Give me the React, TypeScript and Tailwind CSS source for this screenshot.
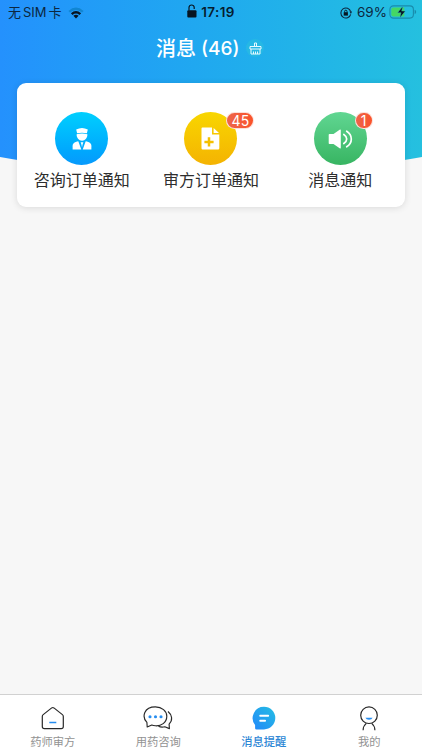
import type { ReactNode } from "react";

type Notice = {
  label: string;
  count?: number;
  circle: string;
  badge?: string;
  icon: ReactNode;
};

type Tab = {
  label: string;
  active?: boolean;
  icon: ReactNode;
};

const PharmacistIcon = () => (
  <svg width="20" height="24" viewBox="0 0 20 24" fill="#fff">
    <path d="M4.200 2.400Q10 -.6 15.800 2.400L14.900 6.300Q10 5 5.100 6.300Z" />
    <path d="M4.600 7.300Q10 5.900 15.400 7.300C15.500 10.700 13.200 13.800 10 13.800S4.500 10.700 4.600 7.300Z" />
    <path d="M6.300 14.300L9.300 22.600H.6V19.200C.6 16.200 2.600 15.100 6.300 14.300Z" />
    <path d="M13.700 14.300L10.700 22.600H19.400V19.200C19.400 16.200 17.400 15.100 13.700 14.300Z" />
    <path d="M8.600 15.200H11.400L10.700 17L10 20.200L9.300 17Z" />
  </svg>
);

const PrescriptionIcon = () => (
  <svg width="19" height="23" viewBox="0 0 19 23">
    <path d="M1.400 .5H11V7.400H18.300V21.300Q18.300 22.500 17.100 22.500H1.600Q.5 22.500 .5 21.300V1.500Q.5 .5 1.400 .5Z" fill="#fff" />
    <path d="M12.600 .9L18 6H12.600Z" fill="#fff" />
    <path d="M8 10.300V19.500M3.400 14.900H12.600" stroke="#f5c000" strokeWidth="2.500" />
  </svg>
);

const SpeakerIcon = () => (
  <svg width="25" height="20" viewBox="0 0 25 20" fill="none">
    <path d="M.7 5.800Q.7 5 1.500 5H5.500L12 .6Q12.800 .2 12.800 1.200V18.800Q12.800 19.800 12 19.400L5.500 15H1.500Q.7 15 .7 14.200Z" fill="#fff" />
    <path d="M15.800 5.500Q18.700 7.400 18.700 10T15.800 14.500M18.700 2.200Q23.300 5.100 23.300 10T18.700 17.800" stroke="#fff" strokeWidth="1.700" strokeLinecap="round" />
  </svg>
);

const HomeIcon = () => (
  <svg width="24" height="24" viewBox="0 0 24 24" fill="none">
    <path d="M2.200 8.600Q1.300 9.300 1.300 10.400V20.600Q1.300 22.700 3.400 22.700H20.200Q22.300 22.700 22.300 20.600V10.400Q22.300 9.300 21.400 8.600L12.900 1.900Q11.800 1.100 10.700 1.900Z" stroke="#292929" strokeWidth="1.200" />
    <path d="M8.300 16.500H15.300" stroke="#268df0" strokeWidth="1.500" />
  </svg>
);

const ChatIcon = () => (
  <svg width="30" height="24" viewBox="0 0 30 24" fill="none">
    <path d="M3.900 16.300C-1.500 10.800 1 .9 12.400 .9C18.900 .9 23.800 4.900 23.800 10.300C23.800 16.600 18 20.300 12.400 19.800Q10.300 19.600 8.800 19L4.200 21Z" stroke="#292929" strokeWidth="1.150" strokeLinejoin="round" />
    <path d="M25 5.500C29.200 8.900 30 14.300 26.100 18.100L26.400 22.600L21.800 20.800Q18.300 21.600 15.400 20.300" stroke="#292929" strokeWidth="1.150" strokeLinejoin="round" />
    <g fill="#268df0">
      <circle cx="7" cy="10.800" r="1.550" />
      <circle cx="12.500" cy="10.800" r="1.550" />
      <circle cx="18" cy="10.800" r="1.550" />
    </g>
  </svg>
);

const MessageIcon = () => (
  <svg width="24" height="24" viewBox="0 0 24 24" fill="none">
    <defs>
      <linearGradient id="bubble" x1="0" y1="1" x2="1" y2="0">
        <stop offset="0" stopColor="#2288fa" />
        <stop offset="1" stopColor="#25bee3" />
      </linearGradient>
    </defs>
    <path d="M12 .8A11.300 11.300 0 1 1 12 23.400L4.600 23.500Q3 23.500 3.100 22V19.100A11.300 11.300 0 0 1 12 .8Z" fill="url(#bubble)" />
    <path d="M8.200 9.800H16.200M8.200 14.800H13.100" stroke="#fff" strokeWidth="1.900" strokeLinecap="round" />
  </svg>
);

const ProfileIcon = () => (
  <svg width="20" height="25" viewBox="0 0 20 25" fill="none">
    <circle cx="10" cy="9.200" r="8.300" stroke="#292929" strokeWidth="1.200" />
    <path d="M4.100 24.200Q4.200 19.900 7.300 17.400M15.900 24.200Q15.800 19.900 12.700 17.400" stroke="#292929" strokeWidth="1.200" />
    <path d="M6.400 11.700H13.600Q12.800 13.700 10 13.700T6.400 11.700Z" fill="#268df0" />
  </svg>
);

const notices: Notice[] = [
  {
    label: "咨询订单通知",
    circle: "from-[#00cffe] to-[#0799fc]",
    icon: <PharmacistIcon />,
  },
  {
    label: "审方订单通知",
    count: 45,
    circle: "from-[#f8d600] to-[#f4b302]",
    badge: "left-[42px] w-7",
    icon: <PrescriptionIcon />,
  },
  {
    label: "消息通知",
    count: 1,
    circle: "from-[#60d692] to-[#37b562]",
    badge: "left-[41px] w-[18px]",
    icon: <SpeakerIcon />,
  },
];

const tabs: Tab[] = [
  { label: "药师审方", icon: <HomeIcon /> },
  { label: "用药咨询", icon: <ChatIcon /> },
  { label: "消息提醒", active: true, icon: <MessageIcon /> },
  { label: "我的", icon: <ProfileIcon /> },
];

const StatusBar = () => (
  <div className="grid h-6 grid-cols-3 items-center text-[#0c2740]">
    <div className="flex items-center pl-2 text-[13px] leading-6">
      <span className="mb-px whitespace-nowrap">
        无<span className="mx-[2px]">SIM</span>卡
      </span>
      <svg className="ml-[6px]" width="16" height="12" viewBox="0 0 16 12">
        <path d="M.4 3.900Q8 -2.900 15.600 3.900L14 5.600Q8 .2 2 5.600Z" fill="#087bbd" opacity=".65" />
        <path d="M2.900 6.300Q8 1.900 13.100 6.300L11.500 8Q8 5.100 4.500 8Z" fill="#071522" />
        <path d="M5.400 8.800Q8 6.900 10.600 8.800L8 11.600Z" fill="#071522" />
      </svg>
    </div>
    <div className="flex items-center justify-center text-[13.500px] font-semibold text-[#061d30]">
      <svg className="mr-[4px] mb-[3px]" width="10" height="14" viewBox="0 0 10 14" fill="none">
        <rect x=".3" y="6.300" width="9.200" height="7.300" rx="1" fill="#071522" />
        <path d="M2 6.500V3.600A2.600 2.600 0 0 1 7.200 3.600V4.900" stroke="#071522" strokeWidth="1.200" />
      </svg>
      <span className="tracking-[0.400px]">17:19</span>
    </div>
    <div className="flex items-center justify-end pr-[5px]">
      <svg className="mr-[5px]" width="12" height="12" viewBox="0 0 12 12" fill="none">
        <path d="M10.700 7.300A5 5 0 1 1 10.700 4.700" stroke="#0c2740" strokeWidth="1.100" />
        <path d="M9.500 4.600H12.100L10.900 6.900Z" fill="#0c2740" />
        <rect x="3.700" y="5.200" width="4.200" height="3.400" fill="#071522" />
        <path d="M4.600 5.300V4.400Q4.600 3.200 5.800 3.200T7 4.400V5.300" stroke="#071522" strokeWidth=".9" />
      </svg>
      <span className="mr-[2px] mb-px text-[13.500px] leading-5">69%</span>
      <svg className="mb-[2px]" width="28" height="14" viewBox="0 0 28 14" fill="none">
        <rect x=".9" y=".9" width="23.500" height="12.200" rx="3.500" stroke="#198bab" strokeWidth="1.100" />
        <path d="M4.300 2.400H15.300V11.600H4.300Q2.300 11.600 2.300 9.600V4.400Q2.300 2.400 4.300 2.400Z" fill="#44d765" />
        <path d="M25.600 4.800Q27.200 5.400 27.200 7T25.600 9.200Z" fill="#198bab" />
        <path d="M13.800 1.200L8.600 7.700H12L10.900 12.800L16.300 6.100H12.700Z" fill="#071522" stroke="#32b7d5" strokeWidth=".4" />
      </svg>
    </div>
  </div>
);

const NoticeItem = ({ notice }: { notice: Notice }) => (
  <div className="flex flex-col items-center pt-[29px]">
    <div className={`relative flex h-[53px] w-[53px] items-center justify-center rounded-full bg-linear-to-b ${notice.circle}`}>
      {notice.icon}
      {notice.count && (
        <span
          className={`absolute top-0 flex h-[17px] items-center justify-center rounded-full border border-white/80 bg-linear-to-r from-[#ed654a] to-[#fa5229] text-[14px] leading-none tracking-[0.300px] text-white ${notice.badge}`}
        >
          {notice.count}
        </span>
      )}
    </div>
    <span className="mt-[3px] text-[16px] leading-6 text-[#2e2e2e]">{notice.label}</span>
  </div>
);

export default function App() {
  return (
    <div className="flex h-[750px] w-[422px] flex-col overflow-hidden bg-[#f7f7f7] font-[Inter,'Noto_Sans_CJK_SC',sans-serif]">
      <header className="h-[175px] shrink-0 bg-linear-to-r from-[#2491fd] to-[#25c0df] [clip-path:ellipse(477px_175px_at_50%_0)]">
        <StatusBar />
        <div className="flex h-12 items-center pl-[156px] text-white">
          <h1 className="flex items-center pt-px text-[20px] leading-none font-medium whitespace-nowrap">
            消息<span className="ml-[5px] text-[19px]">(46)</span>
          </h1>
          <span className="ml-[7px] flex h-[18px] w-[18px] items-center justify-center rounded-full bg-[#26b8e5]">
            <svg width="13" height="13" viewBox="0 0 13 13" fill="none" stroke="#e7faff" strokeWidth="1">
              <path d="M5.500 4.500V1H7.500V4.500M1 7V4.500H12V7ZM2 7V12H11V7M4.500 12V9.500M6.500 12V9.500M8.500 12V9.500" />
            </svg>
          </span>
        </div>
      </header>

      <main className="flex-1">
        <section className="relative mx-[17px] mt-[-92px] grid h-[124px] grid-cols-3 rounded-[9px] bg-white shadow-[0_1px_7px_rgba(0,0,0,0.12)]">
          {notices.map((notice) => (
            <NoticeItem key={notice.label} notice={notice} />
          ))}
        </section>
      </main>

      <nav className="grid h-14 shrink-0 grid-cols-4 border-t border-[#d1d1d1] bg-white">
        {tabs.map((tab) => (
          <div key={tab.label} className="flex flex-col items-center pt-[10px]">
            <div className="flex h-[26px] items-center justify-center">{tab.icon}</div>
            <span
              className={`mt-[3px] text-[11.300px] leading-4 ${tab.active ? "font-medium text-[#2c86d5]" : "text-[#929292]"}`}
            >
              {tab.label}
            </span>
          </div>
        ))}
      </nav>
    </div>
  );
}
